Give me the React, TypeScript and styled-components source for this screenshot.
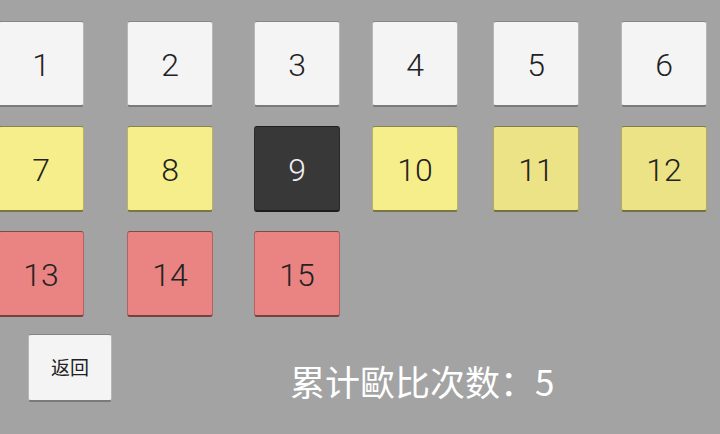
import styled, { createGlobalStyle } from "styled-components";

type Tone = "white" | "yellow" | "olive" | "dark" | "red";

const tiles: { n: number; tone: Tone }[] = [
  { n: 1, tone: "white" },
  { n: 2, tone: "white" },
  { n: 3, tone: "white" },
  { n: 4, tone: "white" },
  { n: 5, tone: "white" },
  { n: 6, tone: "white" },
  { n: 7, tone: "yellow" },
  { n: 8, tone: "yellow" },
  { n: 9, tone: "dark" },
  { n: 10, tone: "yellow" },
  { n: 11, tone: "olive" },
  { n: 12, tone: "olive" },
  { n: 13, tone: "red" },
  { n: 14, tone: "red" },
  { n: 15, tone: "red" },
];

const toneBg: Record<Tone, string> = {
  white: "#f4f4f4",
  yellow: "#f6ee8b",
  olive: "#ebe385",
  dark: "#383838",
  red: "#ea8483",
};

function App() {
  return (
    <Page>
      <GlobalStyle />
      <Board>
        {tiles.map((t) => (
          <Cell key={t.n}>
            <Tile $tone={t.tone}>{t.n}</Tile>
          </Cell>
        ))}
      </Board>
      <Footer>
        <BackButton>返回</BackButton>
        <Count>累计歐比次数：5</Count>
      </Footer>
    </Page>
  );
}

const GlobalStyle = createGlobalStyle`
  html, body {
    margin: 0;
    padding: 0;
    background: #a3a3a3;
    overflow: hidden;
  }
`;

const Page = styled.div`
  width: 720px;
  height: 434px;
  background: #a3a3a3;
  padding-top: 21px;
  box-sizing: border-box;
  font-family: Roboto, "Noto Sans", "Noto Sans CJK SC", sans-serif;
`;

const Board = styled.div`
  display: grid;
  grid-template-columns: 129px 127px 118px 121px 128px 1fr;
  grid-auto-rows: 86px;
  row-gap: 19px;
  margin-left: -2px;
`;

const Cell = styled.div`
  display: flex;
`;

const Tile = styled.div<{ $tone: Tone }>`
  width: 86px;
  height: 86px;
  box-sizing: border-box;
  display: flex;
  align-items: center;
  justify-content: center;
  border-radius: 3px;
  border: 1px solid rgba(0, 0, 0, 0.25);
  border-top-color: rgba(0, 0, 0, 0.45);
  border-bottom: 2px solid rgba(0, 0, 0, 0.5);
  background: ${(p) => toneBg[p.$tone]};
  color: ${(p) => (p.$tone === "dark" ? "#f3eef3" : "#222222")};
  font-size: 32px;
  font-weight: 300;
  padding-top: 3px;
`;

const Footer = styled.div`
  display: flex;
  align-items: flex-start;
  margin-top: 17px;
  padding-left: 28px;
`;

const BackButton = styled.div`
  width: 84px;
  height: 68px;
  box-sizing: border-box;
  display: flex;
  align-items: center;
  justify-content: center;
  background: #f4f4f4;
  border-radius: 3px;
  border: 1px solid rgba(0, 0, 0, 0.25);
  border-top-color: rgba(0, 0, 0, 0.45);
  border-bottom: 2px solid rgba(0, 0, 0, 0.5);
  font-family: "Noto Sans CJK SC", sans-serif;
  font-size: 19px;
  color: #222222;
  padding-bottom: 2px;
`;

const Count = styled.div`
  margin-left: 178px;
  margin-top: 21px;
  font-family: "Noto Sans CJK SC", sans-serif;
  font-size: 35px;
  color: #ffffff;
  white-space: nowrap;
`;

export default App;
